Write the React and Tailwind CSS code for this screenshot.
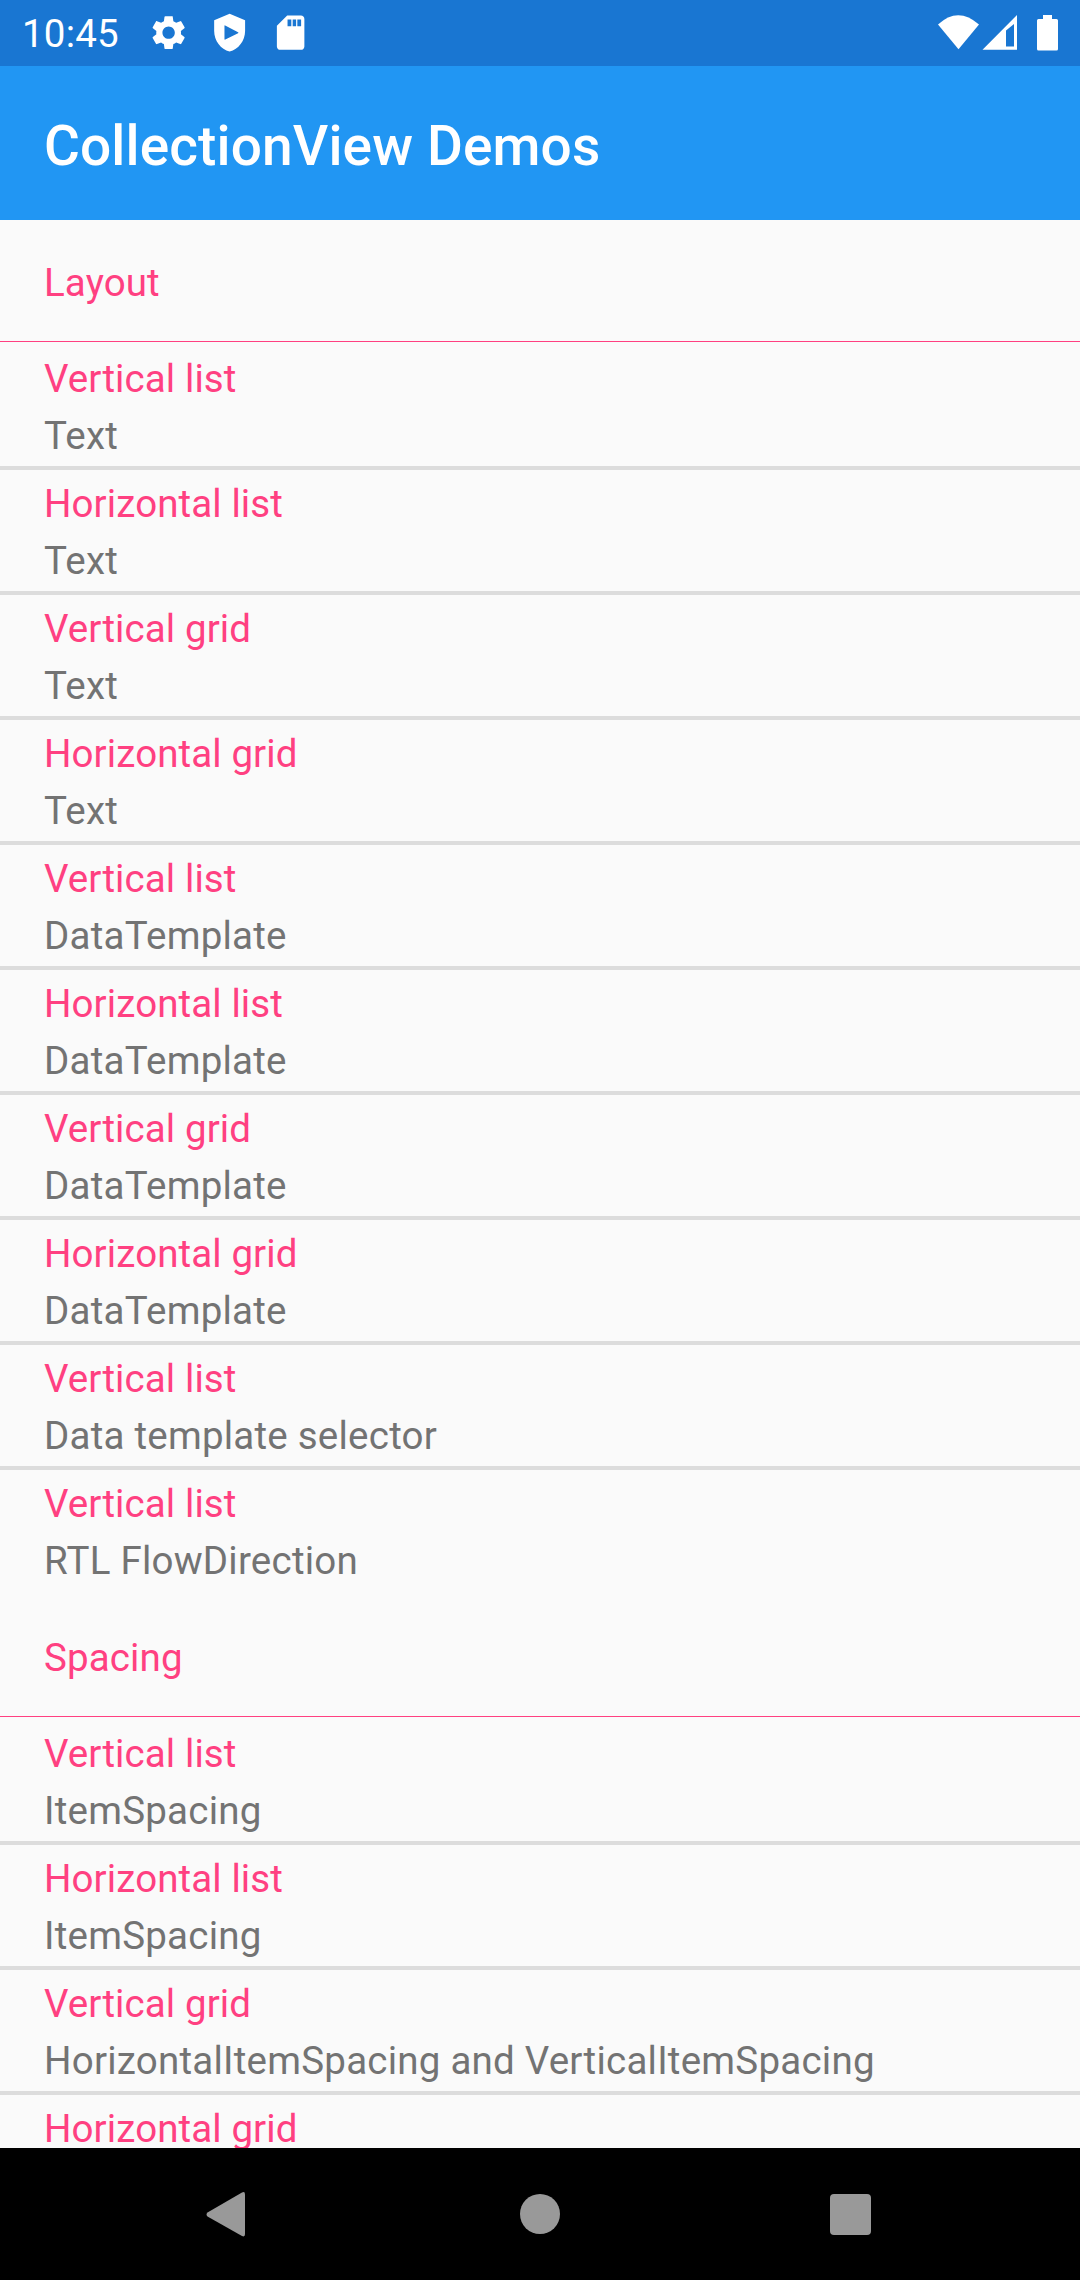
import { MdSettings } from "react-icons/md";

const sections = [
  {
    title: "Layout",
    items: [
      ["Vertical list", "Text"],
      ["Horizontal list", "Text"],
      ["Vertical grid", "Text"],
      ["Horizontal grid", "Text"],
      ["Vertical list", "DataTemplate"],
      ["Horizontal list", "DataTemplate"],
      ["Vertical grid", "DataTemplate"],
      ["Horizontal grid", "DataTemplate"],
      ["Vertical list", "Data template selector"],
      ["Vertical list", "RTL FlowDirection"],
    ],
  },
  {
    title: "Spacing",
    items: [
      ["Vertical list", "ItemSpacing"],
      ["Horizontal list", "ItemSpacing"],
      ["Vertical grid", "HorizontalItemSpacing and VerticalItemSpacing"],
      ["Horizontal grid", ""],
    ],
  },
];

function StatusBar() {
  return (
    <div className="flex h-[66px] shrink-0 items-center justify-between bg-[#1976d2] px-[22px] text-white">
      <div className="flex items-center">
        <span className="w-[126px] pt-[2px] text-[38.5px] leading-[66px] tracking-[0.2px]">10:45</span>
        <MdSettings className="size-[41.25px]" />
        <svg viewBox="0 0 24 24" className="ml-[19.4px] size-[41.25px]" fill="currentColor">
          <path fillRule="evenodd" d="M12 1 3 4.8v6.2c0 5.55 3.84 10.74 9 12 5.16-1.26 9-6.45 9-12V4.8zM9.4 7.800Q9 7.600 9 8.200v7.400q0 .7.500.4L16.900 12.400q.5-.3 0-.6z" />
        </svg>
        <svg viewBox="0 0 24 24" className="ml-[19.9px] size-[41.25px]" fill="currentColor">
          <path fillRule="evenodd" d="M18 2h-8L4 8v12c0 1.1.9 2 2 2h12c1.1 0 2-.9 2-2V4c0-1.1-.9-2-2-2zM10.2 4.3h2.2v4h-2.2zM13.2 4.3h2v4h-2zM15.900 4.3h2.200v4h-2.200z" />
        </svg>
      </div>
      <svg viewBox="0 0 122 40" className="h-[40px] w-[122px]" fill="currentColor">
        <path d="M2 11.500Q22 -7 43 11.500L22.500 36.300z" />
        <path fillRule="evenodd" d="M46.500 36.800 81 2v34.800zM70 17.500v16h8V11z" />
        <path d="M107 2h9v4h4.500q1.500 0 1.500 1.500v28.500q0 1.500-1.500 1.500h-18q-1.500 0-1.500-1.500V7.500q0-1.500 1.500-1.500h4.500z" />
      </svg>
    </div>
  );
}

function Section({ title, items }) {
  return (
    <section>
      <h2 className="h-[125px] pt-[34px] text-[38.5px] leading-[57px] tracking-[0.12px] text-[#ff4081]">
        <div className="h-[88px] border-b border-[#ff4081] px-[44px]">{title}</div>
      </h2>
      <ul>
        {items.map(([name, detail], i) => (
          <li
            key={i}
            className="h-[125px] border-b-4 border-[#dcdcdc] px-[44px] pt-[5px] text-[38.5px] leading-[57px] whitespace-nowrap last:border-transparent"
          >
            <div className="tracking-[0.1px] text-[#ff4081]">{name}</div>
            <div className="tracking-[0.23px] text-[#737373]">{detail}</div>
          </li>
        ))}
      </ul>
    </section>
  );
}

export default function App() {
  return (
    <div className="flex h-[2280px] w-[1080px] flex-col overflow-hidden bg-[#fafafa] font-[Roboto,sans-serif]">
      <StatusBar />
      <header className="flex h-[154px] shrink-0 items-center bg-[#2196f3] px-[44px] pt-[7px]">
        <h1 className="text-[55px] font-medium tracking-[0.13px] text-white">CollectionView Demos</h1>
      </header>
      <main className="min-h-0 flex-1 overflow-hidden">
        {sections.map((s) => (
          <Section key={s.title} {...s} />
        ))}
      </main>
      <nav className="flex h-[132px] shrink-0 items-center justify-center bg-black">
        <svg viewBox="0 0 1080 132" className="h-[132px] w-[1080px]" fill="#999999">
          <path d="M242 44.500Q245 43 245 46.500V86q0 3.500-3 2L207.500 68.500q-2-2 0-4z" />
          <circle cx="540" cy="66" r="20" />
          <rect x="830" y="46" width="41" height="41" rx="4" />
        </svg>
      </nav>
    </div>
  );
}
